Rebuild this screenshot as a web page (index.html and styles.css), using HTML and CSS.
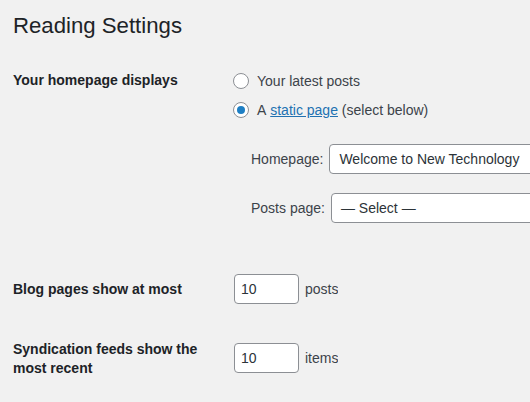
FILE: index.html
```html
<!DOCTYPE html>
<html>
<head>
<meta charset="utf-8">
<link rel="stylesheet" href="styles.css">
</head>
<body>
<div class="wrap">
  <h1 class="title">Reading Settings</h1>
  <div class="row row-front">
    <div class="label">Your homepage displays</div>
    <div class="field">
      <label class="choice"><span class="radio"></span>Your latest posts</label>
      <label class="choice"><span class="radio checked"></span>A&nbsp;<a class="link" href="#">static page</a>&nbsp;(select below)</label>
      <div class="sub sub-first">
        <span class="sub-label">Homepage:</span>
        <span class="select">Welcome to New Technology</span>
      </div>
      <div class="sub sub-second">
        <span class="sub-label">Posts page:</span>
        <span class="select">— Select —</span>
      </div>
    </div>
  </div>
  <div class="row row-blog">
    <div class="label">Blog pages show at most</div>
    <div class="field inline">
      <span class="num">10</span><span class="unit">posts</span>
    </div>
  </div>
  <div class="row row-feed">
    <div class="label label-feed">Syndication feeds show the most recent</div>
    <div class="field inline">
      <span class="num">10</span><span class="unit">items</span>
    </div>
  </div>
</div>
</body>
</html>
```
FILE: styles.css
```css
html, body {
  margin: 0;
  padding: 0;
  background: #f1f1f1;
  overflow: hidden;
}
body {
  font-family: "Liberation Sans", Arial, sans-serif;
  font-size: 14px;
  color: #3c434a;
  width: 530px;
  height: 402px;
}
.wrap {
  padding-left: 13px;
  overflow: hidden;
}
.title {
  margin: 0;
  padding-top: 11px;
  font-size: 22.2px;
  line-height: 30px;
  font-weight: 400;
  color: #1d2327;
}
.row {
  display: flex;
}
.label {
  width: 200px;
  margin-right: 20px;
  flex: none;
  font-weight: 700;
  color: #1d2327;
  line-height: 19px;
}
.label-feed {
  padding-top: 3px;
}
.row-front {
  margin-top: 30px;
}
.field {
  display: flex;
  flex-direction: column;
  min-width: 0;
  flex: 1;
  overflow: hidden;
}
.choice {
  display: flex;
  align-items: center;
  height: 20px;
  line-height: 20px;
  margin-bottom: 9px;
  white-space: nowrap;
}
.radio {
  width: 14px;
  height: 14px;
  border: 1px solid #8c8f94;
  border-radius: 50%;
  background: #fff;
  margin-right: 8px;
  position: relative;
  flex: none;
}
.radio.checked::after {
  content: "";
  position: absolute;
  left: 3px;
  top: 3px;
  width: 8px;
  height: 8px;
  border-radius: 50%;
  background: #1e7fc4;
}
.link {
  color: #2271b1;
  text-decoration: underline;
}
.sub {
  display: flex;
  align-items: center;
  padding-left: 18px;
  white-space: nowrap;
}
.sub-first {
  margin-top: 15px;
}
.sub-second {
  margin-top: 19px;
}
.sub-label {
  margin-right: 6px;
  flex: none;
}
.select {
  display: block;
  width: 300px;
  height: 28px;
  line-height: 28px;
  border: 1px solid #8c8f94;
  border-radius: 4px;
  background: #fff;
  padding-left: 9px;
  color: #2c3338;
  flex: none;
}
.row-blog {
  margin-top: 51px;
  align-items: center;
}
.row-feed {
  margin-top: 33px;
  align-items: center;
}
.inline {
  flex-direction: row;
  align-items: center;
  margin-left: 1px;
  flex: none;
}
.num {
  display: block;
  width: 57px;
  height: 28px;
  line-height: 28px;
  padding-left: 6px;
  border: 1px solid #8c8f94;
  border-radius: 4px;
  background: #fff;
  color: #2c3338;
}
.unit {
  margin-left: 6px;
}
```
